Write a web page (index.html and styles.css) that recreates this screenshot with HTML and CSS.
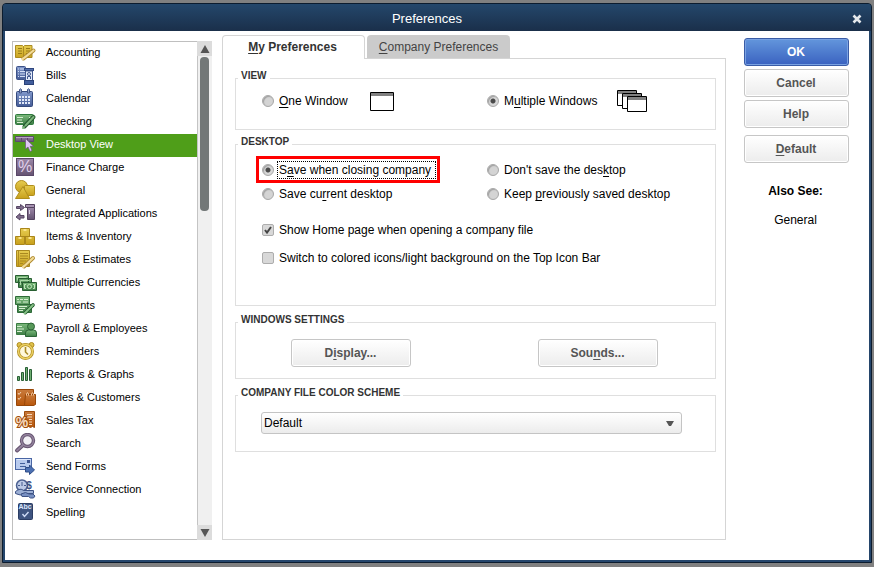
FILE: index.html
```
<!DOCTYPE html>
<html lang="en">
<head>
    <meta charset="UTF-8">
    <meta name="viewport" content="width=device-width, initial-scale=1.0">
    <title>Preferences</title>
    <link rel="stylesheet" href="styles.css">
</head>
<body>
    <!-- shared icon colours -->
    <svg class="defs" width="0" height="0">
        <defs>
            <linearGradient id="gold" x1="0" y1="0" x2="0" y2="1"><stop offset="0" stop-color="#e6cc50"/><stop offset="1" stop-color="#c8a01c"/></linearGradient>
            <linearGradient id="blue" x1="0" y1="0" x2="0" y2="1"><stop offset="0" stop-color="#8299cc"/><stop offset="1" stop-color="#455c96"/></linearGradient>
            <linearGradient id="green" x1="0" y1="0" x2="0" y2="1"><stop offset="0" stop-color="#7cba7c"/><stop offset="1" stop-color="#3f7f47"/></linearGradient>
            <linearGradient id="purple" x1="0" y1="0" x2="0" y2="1"><stop offset="0" stop-color="#9c88a8"/><stop offset="1" stop-color="#655372"/></linearGradient>
            <linearGradient id="orange" x1="0" y1="0" x2="0" y2="1"><stop offset="0" stop-color="#c87a3c"/><stop offset="1" stop-color="#b8560a"/></linearGradient>
        </defs>
    </svg>

    <div class="window">
        <header class="titlebar">
            <h1>Preferences</h1>
            <button class="close" aria-label="Close">
                <svg width="10" height="10" viewBox="0 0 10 10"><path d="M1.5 1.5l7 7M8.5 1.5l-7 7" stroke="#e4e8ec" stroke-width="2.6"/></svg>
            </button>
        </header>

        <div class="content">
            <nav class="sidebar">
                <ul>
                    <li><a href="#">
                        <svg class="icon" viewBox="0 0 24 23"><path d="M2.5 3.500h7l1 1 1-1h7.500v12h-7.500l-1 1-1-1h-7z" fill="url(#gold)" stroke="#ab8b20"/><path d="M10.500 4.500v11" stroke="#ab8b20"/><path d="M5 6.500h4M5 9h4M5 11.500h4M13 6.500h4M13 9h4M13 11.500h2" stroke="#9a7c18"/><path d="M20.500 8.500l-10 8" stroke="#b08a30" stroke-width="4" stroke-linecap="round"/><path d="M20.500 8.500l-9 7.200-2 1.300" stroke="#f2dc98" stroke-width="2.200" stroke-linecap="round"/></svg>
                        Accounting</a></li>
                    <li><a href="#">
                        <svg class="icon" viewBox="0 0 24 23"><rect x="3.500" y="1.500" width="9" height="13" rx="1" fill="url(#blue)" stroke="#3d5288"/><path d="M5 4h1M7 4h5M5 6.500h1M7 6.500h5M5 9h1M7 9h5M5 11.500h1M7 11.500h5" stroke="#d3def5"/><rect x="11.500" y="3.500" width="9" height="2" fill="#5370ae" stroke="#2f467e"/><path d="M12.500 6h7v10h-7z" fill="#e2eafa" stroke="#3f568e"/><circle cx="16" cy="9" r="1.500" fill="none" stroke="#3f568e"/><path d="M14.500 14v-2.500h3V14" fill="none" stroke="#3f568e"/><rect x="11.500" y="15.500" width="9" height="4" fill="#415d9c" stroke="#2b4278"/></svg>
                        Bills</a></li>
                    <li><a href="#">
                        <svg class="icon" viewBox="0 0 24 23"><rect x="3.500" y="3.500" width="16" height="15" rx="1" fill="url(#blue)" stroke="#354a7d"/><path d="M6.500 5V1.500q1-1.500 2 0V5zM14.500 5V1.500q1-1.500 2 0V5z" fill="#94a4c8" stroke="#42578a"/><path d="M6 9h12M6 12h12M6 15h12" stroke="#e2e9f8" stroke-width="2" stroke-dasharray="2 1"/></svg>
                        Calendar</a></li>
                    <li><a href="#">
                        <svg class="icon" viewBox="0 0 24 23"><rect x="2.500" y="3.500" width="18" height="10" rx="1" fill="url(#green)" stroke="#2f7a3e"/><path d="M4 6.500h6M4 9h5M4 11.500h6M16 6.500h3" stroke="#d8f0d4"/><path d="M20.500 6l-9 9.500" stroke="#22582c" stroke-width="4" stroke-linecap="round"/><path d="M20.500 6l-8 8.500M11 16l-1 1" stroke="#7cb77c" stroke-width="2" stroke-linecap="round"/></svg>
                        Checking</a></li>
                    <li><a href="#" class="selected">
                        <svg class="icon" viewBox="0 0 24 23"><path d="M2.500 2.500h6v5h-6zM8.500 2.500h6v5h-6zM14.500 2.500h6v5h-6z" fill="url(#purple)" stroke="#5c4a6c"/><path d="M3 3.500h17" stroke="#b9a3c6"/><path d="M12.500 4.500v10.500l2.500-2 2 4.500 2-1-1.800-4.200h3.300z" fill="#e0c8f4" stroke="#6b5380" stroke-width=".7"/></svg>
                        Desktop View</a></li>
                    <li><a href="#">
                        <svg class="icon" viewBox="0 0 24 23"><rect x="3.500" y="1.500" width="17" height="17" fill="url(#purple)" stroke="#5a4868"/><text x="12" y="15" class="glyph percent">%</text></svg>
                        Finance Charge</a></li>
                    <li><a href="#">
                        <svg class="icon" viewBox="0 0 24 23"><circle cx="8.500" cy="6.500" r="6" fill="url(#gold)" stroke="#b08e1c"/><rect x="11.500" y="5.500" width="10" height="10" rx="1" fill="url(#gold)" stroke="#b08e1c"/><path d="M10 6.500l6.500 12h-14z" fill="url(#gold)" stroke="#b08e1c" stroke-linejoin="round"/></svg>
                        General</a></li>
                    <li><a href="#">
                        <svg class="icon" viewBox="0 0 24 23"><path d="M3.500 3.500h4v-2l4 3-4 3v-2h-4zM11 12.500H7v-2l-4 3.500 4 3v-2h4z" fill="#806e8c" stroke="#574764" stroke-linejoin="round"/><path d="M14.500 4.500h7v12h-7z" fill="url(#purple)" stroke="#54435f"/><path d="M12.500 1.500h9v3h-9z" fill="#a591b0" stroke="#54435f"/><path d="M16.500 7v4" stroke="#d8cde0"/></svg>
                        Integrated Applications</a></li>
                    <li><a href="#">
                        <svg class="icon" viewBox="0 0 24 23"><path d="M7.500 2.500h9v8h-9zM2.500 10.500h9v8h-9zM12.500 10.500h9v8h-9z" fill="url(#gold)" stroke="#aa861a" stroke-linejoin="round"/><path d="M10.500 4h3M5.500 12h3M15.500 12h3" stroke="#fae28a" stroke-width="2"/></svg>
                        Items &amp; Inventory</a></li>
                    <li><a href="#">
                        <svg class="icon" viewBox="0 0 24 23"><path d="M3.500 1.500h13v16h-13z" fill="url(#gold)" stroke="#a98820"/><path d="M5.500 2v15" stroke="#b08c20"/><path d="M7 4.500h8M7 7h8M7 9.500h8M7 12h6M7 14.500h3" stroke="#a98820"/><path d="M20 9l-9 8.500" stroke="#b08a30" stroke-width="4" stroke-linecap="round"/><path d="M20 9l-8 7.500-2 1.500" stroke="#f2dc98" stroke-width="2.200" stroke-linecap="round"/></svg>
                        Jobs &amp; Estimates</a></li>
                    <li><a href="#">
                        <svg class="icon" viewBox="0 0 24 23"><path d="M2.500 3.500h13v7h-13zM5.500 6.500h13v9h-13z" fill="url(#green)" stroke="#285f32"/><path d="M4.500 8.500v-3h9M7.500 13V8.500h9" fill="none" stroke="#abd9a8"/><path d="M9.500 10.500h14v8h-14z" fill="url(#green)" stroke="#285f32"/><path d="M13 12.500h-1.500v4H13M20 12.500h1.500v4H20" fill="none" stroke="#c2e8bd"/><circle cx="16.500" cy="14.500" r="2" fill="#559758" stroke="#c2e8bd"/></svg>
                        Multiple Currencies</a></li>
                    <li><a href="#">
                        <svg class="icon" viewBox="0 0 24 23"><path d="M2.500 1.500h14v8h-14zM4.500 9.500h14v8h-14z" fill="url(#green)" stroke="#2e6b38"/><path d="M4 4.500h2M7 4.500h3M11 4.500h4M4 7h4M10 7h5M6 11.500h8M6 13.500h6M6 15.500h4" stroke="#d8f0d4"/><path d="M20 10l-7.500 7.500" stroke="#22582c" stroke-width="3.600" stroke-linecap="round"/><path d="M20 10l-7 7-1.500 1.500" stroke="#86c286" stroke-width="1.800" stroke-linecap="round"/></svg>
                        Payments</a></li>
                    <li><a href="#">
                        <svg class="icon" viewBox="0 0 24 23"><path d="M3.500 5.500h15v11h-15z" fill="url(#green)" stroke="#3a7b42"/><path d="M4 8.500h5M4 11h7M4 13.500h5" stroke="#d8f0d4"/><path d="M12.500 18.500v-3.500q0-3 3-3h5q3 0 3 3v3.500z" fill="url(#green)" stroke="#2b6335"/><circle cx="18" cy="8.500" r="3.500" fill="#579859" stroke="#2b6335"/></svg>
                        Payroll &amp; Employees</a></li>
                    <li><a href="#">
                        <svg class="icon" viewBox="0 0 24 23"><circle cx="6.500" cy="4" r="2.500" fill="#e0c24a" stroke="#b08d22"/><circle cx="18.500" cy="4" r="2.500" fill="#e0c24a" stroke="#b08d22"/><circle cx="12.500" cy="10.500" r="7" fill="#fff8dc" stroke="#b08d22" stroke-width="3"/><circle cx="12.500" cy="10.500" r="7" fill="none" stroke="#ecd164" stroke-width="1.500"/><path d="M12.500 6v5l2.500 2.500" fill="none" stroke="#a98a26" stroke-width="1.600"/></svg>
                        Reminders</a></li>
                    <li><a href="#">
                        <svg class="icon" viewBox="0 0 24 23"><path d="M4.500 12.500h2v4h-2zM8.500 8.500h2v8h-2zM12.500 3.500h2v13h-2zM16.500 5.500h2v11h-2z" fill="#6fae72" stroke="#285e35" stroke-linejoin="round"/></svg>
                        Reports &amp; Graphs</a></li>
                    <li><a href="#">
                        <svg class="icon" viewBox="0 0 24 23"><path d="M3.500 2.500h17v16h-17z" fill="url(#orange)" stroke="#984708"/><path d="M5 6l1 1.500L8 5M5 11l1 1.500L8 10" fill="none" stroke="#f4d4b4"/><path d="M11.500 18.500l1-11h10v10l-2 1z" fill="url(#orange)" stroke="#984708"/><path d="M13.500 8.500V7q1-3 2 0v1.500M18.500 8.500V7q1-3 2 0v1.500" fill="none" stroke="#f0c49a"/></svg>
                        Sales &amp; Customers</a></li>
                    <li><a href="#">
                        <svg class="icon" viewBox="0 0 24 23"><path d="M11.500 1.500h10v16l-2-1-2 1-2-1-2 1-2-1z" fill="url(#orange)" stroke="#9c4b0a"/><path d="M14 4.500h5M14 7h5M16 9.500h3M16 12h3M16 14.500h3" stroke="#f6d9bb"/><text x="9" y="17" class="glyph tax">%</text></svg>
                        Sales Tax</a></li>
                    <li><a href="#">
                        <svg class="icon" viewBox="0 0 24 23"><path d="M9.500 12.500l-5.500 5" stroke="#65536f" stroke-width="4" stroke-linecap="round"/><circle cx="14.500" cy="7.500" r="6" fill="#f2f0f5" stroke="#65536f" stroke-width="3.400"/><circle cx="14.500" cy="7.500" r="6" fill="none" stroke="#93829d" stroke-width="1.500"/><path d="M9.500 12.500L4 17.500" stroke="#93829d" stroke-width="1.800" stroke-linecap="round"/></svg>
                        Search</a></li>
                    <li><a href="#">
                        <svg class="icon" viewBox="0 0 24 23"><rect x="2.500" y="2.500" width="16" height="11" fill="#b9cbee" stroke="#4a66a4"/><path d="M3.500 3.500h14" stroke="#e0e9fb"/><path d="M14 4h3v3h-3z" fill="#3d5590"/><path d="M7 7.500h5M7 10.500h6" stroke="#44609c"/><path d="M12.500 11.500h4V9l5 5-5 4.500v-2.500h-4z" fill="#4c70b2" stroke="#2e4c88" stroke-linejoin="round"/></svg>
                        Send Forms</a></li>
                    <li><a href="#">
                        <svg class="icon" viewBox="0 0 24 23"><circle cx="9" cy="6.500" r="5.500" fill="#bdcae5" stroke="#4b6090" stroke-width="1.500"/><path d="M9 3v4M5 6.500h2M11 6.500h2" stroke="#445a8c"/><text x="16" y="10" class="glyph dollar">$</text><path d="M2.500 12.500q5-4 8-1h10v3h-9q-4 3-9 0z" fill="#9cafd4" stroke="#3d5285"/><path d="M8 15q5-3 8 0h4l2 2-1.500 2h-3l-2-1.500H9z" fill="#7890c2" stroke="#3d5285"/></svg>
                        Service Connection</a></li>
                    <li><a href="#">
                        <svg class="icon" viewBox="0 0 24 23"><rect x="5.500" y="1.500" width="14" height="16" rx="1" fill="#3e5480" stroke="#2b3d63"/><text x="12" y="7" class="glyph abc">Abc</text><path d="M9.500 12l2 2.500 4-4.500" fill="none" stroke="#cfdcf6" stroke-width="1.400"/></svg>
                        Spelling</a></li>
                </ul>
                <div class="scrollbar">
                    <button aria-label="Scroll up"><svg width="10" height="8" viewBox="0 0 10 8"><path d="M5 0l4.500 8h-9z" fill="#555"/></svg></button>
                    <div class="track"><div class="thumb"></div></div>
                    <button aria-label="Scroll down"><svg width="10" height="8" viewBox="0 0 10 8"><path d="M5 8L.5 0h9z" fill="#555"/></svg></button>
                </div>
            </nav>

            <main class="main">
                <div class="tabs">
                    <button class="tab active"><span><u>M</u>y Preferences</span></button>
                    <button class="tab"><span><u>C</u>ompany Preferences</span></button>
                </div>
                <form class="panel">
                    <fieldset class="view">
                        <legend>VIEW</legend>
                        <div class="options">
                            <div class="option">
                                <label><input type="radio" name="view"><span><u>O</u>ne Window</span></label>
                                <svg width="24" height="19" viewBox="0 0 24 19"><path d="M.5.5h23v18H.5z" fill="#fff" stroke="#000"/><path d="M1 1h22v3H1z" fill="#808080"/></svg>
                            </div>
                            <div class="option multiple">
                                <label><input type="radio" name="view" checked><span>M<u>u</u>ltiple Windows</span></label>
                                <svg width="30" height="22" viewBox="0 0 30 22"><path d="M.5.5h19v15H.5z" fill="#fff" stroke="#000"/><path d="M1 1h18v3H1z" fill="#808080"/><path d="M5.500 3.500h19v15h-19z" fill="#fff" stroke="#000"/><path d="M6 4h18v3H6z" fill="#808080"/><path d="M10.500 6.500h19v15h-19z" fill="#fff" stroke="#000"/><path d="M11 7h18v3H11z" fill="#808080"/></svg>
                            </div>
                        </div>
                    </fieldset>

                    <fieldset class="desktop">
                        <legend>DESKTOP</legend>
                        <div class="options">
                            <div class="option highlight"><label><input type="radio" name="desktop" checked><span class="focus">S<u>a</u>ve when closing company</span></label></div>
                            <div class="option"><label><input type="radio" name="desktop"><span>Don't save the des<u>k</u>top</span></label></div>
                            <div class="option"><label><input type="radio" name="desktop"><span>Save cu<u>r</u>rent desktop</span></label></div>
                            <div class="option"><label><input type="radio" name="desktop"><span>Keep <u>p</u>reviously saved desktop</span></label></div>
                        </div>
                        <div class="checks">
                            <label><input type="checkbox" checked><span>Show Home page when opening a company file</span></label>
                            <label><input type="checkbox"><span>Switch to colored icons/light background on the Top Icon Bar</span></label>
                        </div>
                    </fieldset>

                    <fieldset class="settings">
                        <legend>WINDOWS SETTINGS</legend>
                        <div class="buttons">
                            <button type="button" class="btn"><span>D<u>i</u>splay...</span></button>
                            <button type="button" class="btn"><span>Sou<u>n</u>ds...</span></button>
                        </div>
                    </fieldset>

                    <fieldset class="scheme">
                        <legend>COMPANY FILE COLOR SCHEME</legend>
                        <div class="select">
                            <select aria-label="Company file color scheme">
                                <option>Default</option>
                            </select>
                            <svg width="8" height="5" viewBox="0 0 8 5"><path d="M0 0h8L5 5H3z" fill="#555"/></svg>
                        </div>
                    </fieldset>
                </form>
            </main>

            <aside class="actions">
                <button class="btn primary">OK</button>
                <button class="btn">Cancel</button>
                <button class="btn">Help</button>
                <button class="btn default"><span><u>D</u>efault</span></button>
                <h2>Also See:</h2>
                <a href="#">General</a>
            </aside>
        </div>
    </div>
</body>
</html>
```

FILE: styles.css
```
* { box-sizing: border-box; }
body {
    margin: 0;
    padding: 3px 2px 4px;
    min-height: 100vh;
    display: flex;
    background: #808080;
    font-family: "Liberation Sans", Arial, sans-serif;
    font-size: 12px;
    line-height: 16px;
    color: #000;
}
button, select { font-family: inherit; font-size: 12px; line-height: 16px; }
.defs { position: absolute; }
svg { display: block; flex: none; fill: none; }
u { text-decoration: underline; text-underline-offset: 2px; text-decoration-skip-ink: none; }

.window {
    flex: 1;
    display: flex;
    flex-direction: column;
    border: 1px solid #0c1c2e;
    border-radius: 4px 4px 0 0;
    background: #24456b;
    padding: 0 2px 2px;
}
.titlebar {
    display: flex;
    align-items: center;
    height: 27px;
    margin: 0 -2px;
    padding: 2px 8px 0 0;
    border-radius: 3px 3px 0 0;
    background: linear-gradient(#24476b, #1a2f4a);
}
.titlebar h1 {
    flex: 1;
    margin: 0;
    text-align: center;
    font-size: 13px;
    font-weight: normal;
    color: #fff;
}
.close { width: 12px; height: 12px; padding: 1px; border: 0; background: none; }

.content {
    flex: 1;
    display: flex;
    align-items: stretch;
    padding: 4px 20px 20px 7px;
    background: #fff;
}

/* left list */
.sidebar { display: flex; width: 200px; margin-top: 6px; margin-right: 10px; }
.sidebar ul {
    flex: 1;
    margin: 0;
    padding: 0;
    list-style: none;
    border: 1px solid #bfbfbf;
    border-right: 0;
}
.sidebar a {
    display: flex;
    align-items: flex-start;
    gap: 9px;
    height: 23px;
    font-size: 11px;
    line-height: 21px;
    color: #000;
    text-decoration: none;
}
.sidebar a.selected { background: #4f9e19; color: #fff; }
.icon { width: 24px; height: 23px; }
.glyph { font-family: "Liberation Sans", Arial, sans-serif; text-anchor: middle; }
.percent { font-size: 16px; fill: #e2d2ec; }
.tax { font-size: 14px; font-weight: bold; fill: #f8dcc0; stroke: #a04e10; stroke-width: 2px; paint-order: stroke; }
.dollar { font-size: 10px; font-weight: bold; fill: #3d5285; }
.abc { font-size: 7px; font-weight: bold; fill: #dbe5fa; }

.scrollbar { display: flex; flex-direction: column; width: 15px; background: #f0f0f0; }
.scrollbar button {
    display: flex;
    align-items: center;
    justify-content: center;
    height: 15px;
    padding: 0;
    border: 0;
    background: #dcdcdc;
}
.track { flex: 1; padding: 1px 3px; border-left: 1px solid #c4c4c4; }
.thumb { width: 9px; height: 154px; margin-left: -1px; border-radius: 4px; background: #737878; }

/* tabs */
.main { flex: 1; display: flex; flex-direction: column; }
.tabs { display: flex; align-items: flex-end; gap: 2px; height: 24px; }
.tab {
    width: 143px;
    height: 23px;
    padding: 0;
    border: 0;
    border-radius: 4px 4px 0 0;
    background: #cbcbcb;
    color: #444;
    margin-bottom: 1px;
    font-size: 12px;
}
.tab.active {
    height: 24px;
    margin-bottom: 0;
    padding: 0 2px 1px 0;
    border: 1px solid #d5d5d5;
    border-bottom: 0;
    background: #fff;
    color: #333;
    font-weight: bold;
    z-index: 1;
}
.panel { flex: 1; margin-top: -1px; padding: 10px 9px 0 12px; border: 1px solid #d5d5d5; }

fieldset { margin: 0; padding: 0 2px; border: 1px solid #dfdfdf; min-width: 0; }
legend { padding: 1px 3px 5px; font-size: 10px; line-height: 12px; font-weight: bold; color: #333; }
.view { margin-bottom: 5px; }
.desktop, .settings { margin-bottom: 7px; }

label { display: flex; align-items: center; gap: 3px; }
label span { padding: 0 1px; border: 1px solid transparent; white-space: nowrap; }
label .focus { padding-right: 4px; border: 1px dotted #000; }
input { appearance: none; flex: none; width: 12px; height: 12px; margin: 0; }
input[type="radio"] {
    border: 1px solid #a8a8a8;
    border-radius: 50%;
    background: #d4d4d4;
    box-shadow: inset 1px 1px 1px #a0a0a0;
}
input[type="radio"]:checked { background: radial-gradient(circle, #4a4a4a 2px, #d8d8d8 3px); }
input[type="checkbox"] { border: 1px solid #adadad; border-radius: 2px; background: #d8d8d8; }
input[type="checkbox"]:checked {
    background: #d8d8d8 url("data:image/svg+xml,%3Csvg xmlns='http://www.w3.org/2000/svg' viewBox='0 0 10 10'%3E%3Cpath d='M2 5l2 2.500 4-5.500' fill='none' stroke='%23444' stroke-width='2'/%3E%3C/svg%3E") center / 10px 10px;
}

.options { display: grid; grid-template-columns: 1fr 1fr; padding: 5px 1px 0 24px; }
.option { display: flex; align-items: center; gap: 20px; height: 24px; }
.multiple { gap: 18px; }
.view .options { padding-top: 2px; padding-bottom: 16px; }
.highlight {
    justify-self: start;
    height: 27px;
    margin: -2px 0 -1px -6px;
    padding: 0 1px 0 3px;
    border: 3px solid #f00;
}
.checks { display: grid; gap: 4px; padding: 12px 0 35px 24px; }
.checks label { height: 24px; }

.buttons { display: flex; justify-content: center; gap: 127px; padding: 8px 2px 11px 0; }
.buttons .btn { width: 120px; }
.btn {
    height: 28px;
    padding: 0 1px 0 0;
    border: 1px solid #c6c6c6;
    border-radius: 3px;
    background: linear-gradient(#fff, #ececec);
    box-shadow: inset 0 0 0 1px #fff;
    color: #555;
    font-weight: bold;
}
.select { display: flex; align-items: center; margin: 8px 31px 17px 23px; }
.select select {
    flex: 1;
    appearance: none;
    height: 22px;
    padding: 0 2px;
    border: 1px solid #c4c4c4;
    border-radius: 3px;
    background: linear-gradient(#fff, #ececec);
    color: #000;
}
.select svg { margin-left: -16px; margin-right: 8px; pointer-events: none; }

/* right column */
.actions { display: flex; flex-direction: column; gap: 3px; width: 105px; margin-left: 18px; padding-top: 3px; text-align: center; }
.btn.default { margin-top: 4px; }
.btn.primary {
    border-color: #3a5ca6;
    background: linear-gradient(#6396dc, #3a62c0);
    box-shadow: inset 0 0 0 1px #7aa2e2;
    color: #fff;
}
.actions h2 { margin: 17px 0 10px; font-size: 12px; }
.actions h2, .actions a { padding-right: 2px; }
.actions a { color: #000; text-decoration: none; }
```
